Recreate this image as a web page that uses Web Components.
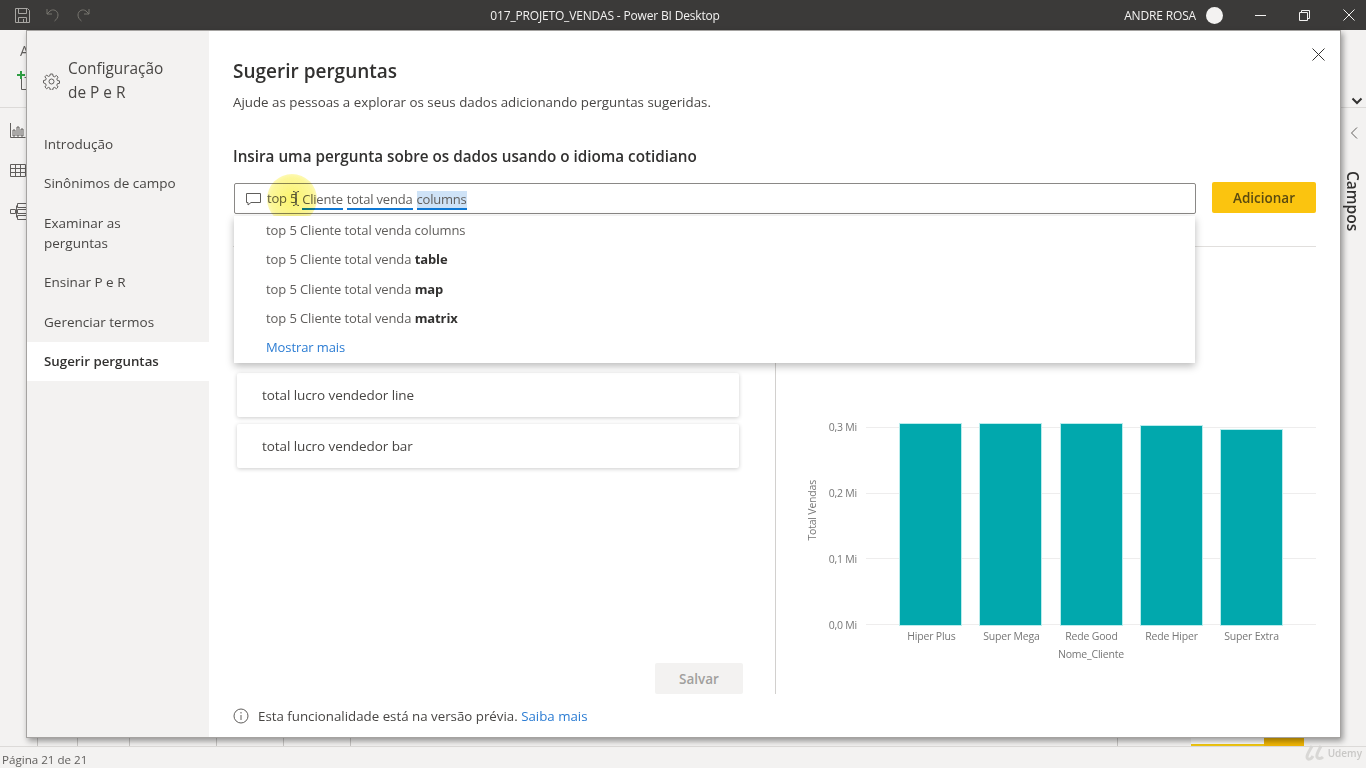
<!DOCTYPE html>
<html lang="pt">
<head>
<meta charset="utf-8">
<title>017_PROJETO_VENDAS - Power BI Desktop</title>
<style>
html, body { margin: 0; height: 100%; overflow: hidden; }
body { font-family: "Open Sans", "Liberation Sans", sans-serif; color: #323130; }
</style>
</head>
<body>
<pbi-app></pbi-app>
<script>
const define = (name, css, html, init) => {
	customElements.define(name, class extends HTMLElement {
		constructor() {
			super();
			this.attachShadow({ mode: 'open' });
			this.shadowRoot.innerHTML = `<style>${css}</style>${html}`;
			if (init) init(this.shadowRoot, this);
		}
	});
};

define('pbi-titlebar', `
	:host { display: flex; align-items: center; position: relative; height: 30px; background: #3b3a39; color: #f3f2f1; font-size: 12px; }
	svg { display: block; fill: none; stroke: currentColor; stroke-width: 1; }
	.left { display: flex; align-items: center; gap: 14px; padding-left: 14px; width: 120px; }
	.left .dim { color: #77756f; }
	.title { flex: 1; text-align: center; padding-right: 160px; margin-left: 112px; letter-spacing: -.17px; white-space: nowrap; }
	.user { display: flex; align-items: center; gap: 10px; letter-spacing: -.16px; }
	.dot { width: 17px; height: 17px; border-radius: 50%; background: #f3f2f1; }
	.win { display: flex; align-items: center; margin-left: 32px; gap: 33px; padding-right: 11px; }
`, `
	<div class="left">
		<svg width="17" height="17" viewBox="0 0 17 17" style="color:#a8a6a3"><path d="M1.5 1.5h12l2 2v12h-14z"/><path d="M4.5 1.5v5h8v-5M4.5 15.5v-5h8v5M9.5 12v3"/></svg>
		<svg class="dim" width="16" height="16" viewBox="0 0 16 16"><path d="M2 2v5h5M2 7l3-3c3-2.500 8-.5 8 4 0 2.500-1.500 4.500-3.500 6"/></svg>
		<svg class="dim" width="16" height="16" viewBox="0 0 16 16"><path d="M14 2v5H9M14 7l-3-3C8 1.500 3 3.500 3 8c0 2.500 1.500 4.500 3.500 6"/></svg>
	</div>
	<div class="title">017_PROJETO_VENDAS - Power BI Desktop</div>
	<div class="user">ANDRE ROSA <span class="dot"></span></div>
	<div class="win">
		<svg width="11" height="11" viewBox="0 0 11 11"><path d="M0 5.500h11"/></svg>
		<svg width="11" height="11" viewBox="0 0 11 11"><path d="M.5 2.500h8v8h-8zM2.500 2.500v-2h8v8h-2"/></svg>
		<svg width="12" height="12" viewBox="0 0 12 12"><path d="M.5.500l11 11M11.500.500l-11 11"/></svg>
	</div>
`);

define('pbi-backdrop', `
	:host { display: grid; grid-template-rows: 78px 1fr; grid-template-columns: 1fr 25px; min-height: 0; background: #f3f2f1; color: #605e5c; }
	svg { display: block; fill: none; stroke: #605e5c; stroke-width: 1; }
	.ribbon { grid-column: 1 / 3; border-bottom: 1px solid #dcdad8; display: flex; flex-direction: column; padding: 11px 0 0 20px; position: relative; font-size: 14px; }
	.ribbon .plus { margin: 11px 0 0 -5px; }
	.ribbon .fold { position: absolute; right: 3px; bottom: 2px; stroke: #323130; stroke-width: 2; }
	.rail { display: flex; flex-direction: column; gap: 24px; padding: 14px 0 0 10px; }
	.panel { display: flex; flex-direction: column; align-items: center; padding-top: 19px; color: #323130; }
	.panel span { writing-mode: vertical-rl; margin-top: 32px; margin-left: -1px; font-size: 15.500px; font-weight: 600; }
`, `
	<div class="ribbon">
		<span>A</span>
		<svg class="plus" width="20" height="19" viewBox="0 0 20 19"><path d="M6.500 6.500v12h11v-12h-8" stroke="#605e5c"/><path d="M6 0v8M2 4h8" stroke="#2f9e44" stroke-width="2"/></svg>
		<svg class="fold" width="12" height="8" viewBox="0 0 12 8"><path d="M1.500 1.500l4.500 4.500 4.500-4.500"/></svg>
	</div>
	<div class="rail">
		<svg width="16" height="16" viewBox="0 0 16 16"><path d="M.5 1v14.500h15M3 14V8h2v6zM7 14V5h2v9zM11 14V7h2v7z"/></svg>
		<svg width="16" height="16" viewBox="0 0 16 16"><path d="M.5 2.500h15v12H.5zM.5 6.500h15M.5 10.500h15M5.500 2.500v12M10.500 2.500v12"/></svg>
		<svg width="17" height="18" viewBox="0 0 17 18"><path d="M.5 7.500h5v4h-5zM7.500 1.500h9v4h-9zM7.500 7.500h9v4h-9zM7.500 13.500h9v4h-9zM5.500 9.500h2M6.500 3.500v12"/></svg>
	</div>
	<div class="panel">
		<svg width="8" height="12" viewBox="0 0 8 12"><path d="M7 .5L1.500 6 7 11.500"/></svg>
		<span>Campos</span>
	</div>
`);

define('pbi-page-tabs', `
	:host { display: flex; height: 10px; background: #f3f2f1; border-bottom: 1px solid #dcdad8; box-sizing: border-box; }
	i { display: block; border-right: 1px solid #c8c6c4; box-sizing: border-box; }
	.active { width: 73px; background: #fff; border: 0; border-bottom: 2px solid #f2c811; }
	.gold { width: 40px; background: #f2b705; border: 0; }
`, `
	<i style="width:38px"></i><i style="width:40px"></i><i style="width:52px"></i><i style="width:87px"></i><i style="width:67px"></i><i style="width:67px"></i><i style="width:767px"></i><i style="width:73px;border:0"></i><i class="active"></i><i class="gold"></i>
`);

define('pbi-statusbar', `
	:host { display: flex; justify-content: space-between; align-items: center; height: 21px; box-sizing: border-box; padding: 4px 4px 0 2px; background: #f3f2f1; font-size: 11.600px; color: #605e5c; }
	.udemy { display: flex; align-items: center; gap: 2px; color: #c9c8c6; font-weight: 600; font-size: 10px; margin-top: -13px; }
	svg { display: block; fill: none; stroke: #d8d7d5; stroke-width: 3; }
`, `
	<span>Página 21 de 21</span>
	<span class="udemy"><svg width="22" height="17" viewBox="0 0 22 17"><path d="M8 1C6 5 3 9 3 12c0 3 4 3 6-1M17 1c-2 4-5 8-4 11 1 2 4 2 6 0"/></svg>Udemy</span>
`);

define('pbi-nav-item', `
	:host { display: block; padding: 9.75px 17px; font-size: 13.5px; line-height: 20px; color: #484644; }
	:host([selected]) { background: #fff; font-weight: 600; font-size: 13.300px; color: #323130; }
`, `<slot></slot>`);

define('pbi-nav', `
	:host { display: flex; flex-direction: column; flex: 0 0 182px; background: #f3f2f1; }
	header { display: flex; align-items: center; gap: 8px; padding: 26px 16px 0 16px; margin-bottom: 19px; font-size: 15.400px; line-height: 24px; color: #484644; }
	svg { flex: none; display: block; fill: none; stroke: #605e5c; stroke-width: 1; }
`, `
	<header>
		<svg width="17" height="17" viewBox="0 0 17 17"><circle cx="8.500" cy="8.500" r="2.500"/><path d="M7.300 1h2.400l.4 2.200 1.500.6 1.800-1.300 1.700 1.700-1.300 1.800.6 1.500 2.100.4v2.400l-2.100.4-.6 1.500 1.300 1.800-1.700 1.700-1.800-1.300-1.500.6-.4 2.200H7.300l-.4-2.200-1.500-.6-1.800 1.300-1.700-1.700 1.300-1.800-.6-1.500L.5 9.900V7.500l2.100-.4.6-1.500-1.300-1.800 1.700-1.700 1.800 1.300 1.500-.6z"/></svg>
		<span>Configuração<br>de P e R</span>
	</header>
	<slot></slot>
`);

define('pbi-question-input', `
	:host { display: block; position: relative; flex: 1; font-size: 13px; color: #605e5c; }
	.box { display: flex; align-items: center; gap: 6px; height: 31px; box-sizing: border-box; border: 1px solid #8a8886; border-radius: 2px; padding: 1px 12px 0 11px; background: #fff; white-space: nowrap; }
	svg { display: block; fill: none; stroke: #605e5c; stroke-width: 1; flex: none; }
	.text { display: flex; gap: 4px; letter-spacing: -.2px; }
	.text > span { margin-right: 1px; }
	u { text-decoration: none; border-bottom: 2px solid #0f78d4; line-height: 17px; margin-top: 2px; }
	.sel { background: #cfe3f7; }
	.halo { position: absolute; left: 33px; top: -9px; width: 50px; height: 50px; border-radius: 50%; mix-blend-mode: multiply; background: radial-gradient(circle, rgba(250,240,60,.75) 0, rgba(250,240,70,.55) 60%, rgba(250,240,70,0) 100%); pointer-events: none; }
	.caret { position: absolute; left: 58px; top: 8px; stroke: #4b4a3a; }
	.menu { position: absolute; left: 0; right: 1px; top: 33px; padding-bottom: 1px; background: #fff; box-shadow: 0 3px 8px rgba(0,0,0,.28); z-index: 2; }
	.menu div { height: 29.250px; line-height: 29px; padding-left: 32px; letter-spacing: -.1px; }
	.menu b { color: #323130; font-weight: 700; }
	.menu .more { color: #2b7cd3; }
`, `
	<div class="box">
		<svg width="15" height="14" viewBox="0 0 15 14"><path d="M.5 1.500h14v9H5l-3 2.500v-2.500H.5z"/></svg>
		<span class="text"><span>top 5</span><u>Cliente</u><u>total venda</u><u class="sel">columns</u></span>
	</div>
	<span class="halo"></span>
	<svg class="caret" width="8" height="15" viewBox="0 0 8 15"><path d="M1 .5c2 0 3 1 3 2v10c0 1-1 2-3 2M7 .5c-2 0-3 1-3 2v10c0 1 1 2 3 2"/></svg>
	<div class="menu">
		<div>top 5 Cliente total venda columns</div>
		<div>top 5 Cliente total venda <b>table</b></div>
		<div>top 5 Cliente total venda <b>map</b></div>
		<div>top 5 Cliente total venda <b>matrix</b></div>
		<div class="more">Mostrar mais</div>
	</div>
`);

define('pbi-button', `
	:host { display: flex; align-items: center; justify-content: center; height: 31px; border-radius: 2px; font-size: 13.500px; font-weight: 600; background: #fbc40f; color: #5a4a10; }
	:host([disabled]) { background: #f3f2f1; color: #a19f9d; width: 88px; }
`, `<slot></slot>`);

define('pbi-question-card', `
	:host { display: flex; align-items: center; height: 44px; width: 502px; box-sizing: border-box; padding-left: 25px; border-radius: 2px; background: #fff; box-shadow: 0 1px 4px rgba(0,0,0,.2); font-size: 13.500px; color: #484644; letter-spacing: -.08px; }
`, `<slot></slot>`);

define('pbi-bar-chart', `
	:host { display: grid; grid-template-columns: 90px 450px; font-size: 10.500px; color: #777; letter-spacing: -.2px; margin-top: 173px; align-self: start; }
	.ytitle { position: absolute; left: 29px; top: 60px; writing-mode: vertical-rl; transform: rotate(180deg); line-height: 14px; }
	.y { position: relative; display: flex; flex-direction: column; justify-content: space-between; align-items: flex-end; height: 212px; margin-bottom: -9px; padding-right: 9px; box-sizing: border-box; line-height: 14px; }
	.plot { position: relative; height: 198px; margin-top: 7px; }
	.grid { position: absolute; inset: 0; display: flex; flex-direction: column; justify-content: space-between; }
	.grid i { display: block; border-top: 1px solid #eeeded; }
	.bars { position: absolute; left: 33px; right: 33px; bottom: -1px; display: flex; align-items: flex-end; gap: 17.250px; }
	.bars i { display: block; flex: 1; background: #01a8ad; outline: 1px solid #b9ecec; outline-offset: -1px; }
	.cats { grid-column: 2; display: flex; gap: 17.250px; padding: 0 33px 0 34px; margin-top: 4px; line-height: 14px; }
	.cats span { flex: 1 1 0; min-width: 0; text-align: center; white-space: nowrap; }
	.xtitle { grid-column: 2; text-align: center; margin-top: 4px; line-height: 14px; }
`, `
	<div class="y">
		<span class="ytitle">Total Vendas</span>
		<span>0,3 Mi</span><span>0,2 Mi</span><span>0,1 Mi</span><span>0,0 Mi</span>
	</div>
	<div class="plot">
		<div class="grid"><i></i><i></i><i></i><i></i></div>
		<div class="bars"></div>
	</div>
	<div class="cats"></div>
	<div class="xtitle">Nome_Cliente</div>
`, (root) => {
	const data = [['Hiper Plus', 203], ['Super Mega', 203], ['Rede Good', 203], ['Rede Hiper', 201], ['Super Extra', 197]];
	root.querySelector('.bars').innerHTML = data.map(d => `<i style="height:${d[1]}px"></i>`).join('');
	root.querySelector('.cats').innerHTML = data.map(d => `<span>${d[0]}</span>`).join('');
});

define('pbi-dialog', `
	:host { position: absolute; left: 26px; top: 30px; width: 1315px; height: 708px; box-sizing: border-box; display: flex; background: #fff; border: 1px solid #a5a3a1; box-shadow: 2px 3px 6px rgba(0,0,0,.4); }
	main { flex: 1; min-width: 0; display: flex; flex-direction: column; padding: 0 24px 0 24px; position: relative; }
	svg { display: block; fill: none; stroke: #323130; stroke-width: 1; }
	.close { position: absolute; right: 15px; top: 17px; }
	h1 { margin: 27px 0 0; font-size: 19px; line-height: 26px; font-weight: 600; color: #323130; }
	p { margin: 9px 0 0; font-size: 13.330px; line-height: 18px; color: #484644; }
	h2 { margin: 35px 0 0; font-size: 15.250px; line-height: 20px; font-weight: 600; color: #323130; }
	.ask { display: flex; gap: 16px; margin: 17px 0 0 1px; align-items: flex-start; }
	.ask pbi-button { width: 104px; margin-top: -1px; }
	.split { display: flex; height: 447px; margin-top: 32px; border-top: 1px solid #e1dfdd; }
	.list { width: 511px; margin-right: 32px; padding: 126px 0 0 4px; box-sizing: border-box; display: flex; flex-direction: column; gap: 7px; position: relative; }
	.list pbi-button { position: absolute; right: 0; bottom: 0; }
	.chart { flex: 1; border-left: 1px solid #d2d0ce; display: flex; position: relative; }
	.note { display: flex; align-items: center; gap: 9px; margin-top: 13px; font-size: 13.300px; line-height: 18px; color: #484644; }
	a { color: #2b7cd3; text-decoration: none; }
`, `
	<pbi-nav>
		<pbi-nav-item>Introdução</pbi-nav-item>
		<pbi-nav-item>Sinônimos de campo</pbi-nav-item>
		<pbi-nav-item>Examinar as<br>perguntas</pbi-nav-item>
		<pbi-nav-item>Ensinar P e R</pbi-nav-item>
		<pbi-nav-item>Gerenciar termos</pbi-nav-item>
		<pbi-nav-item selected>Sugerir perguntas</pbi-nav-item>
	</pbi-nav>
	<main>
		<svg class="close" width="13" height="13" viewBox="0 0 13 13"><path d="M.5.500l12 12M12.500.500l-12 12"/></svg>
		<h1>Sugerir perguntas</h1>
		<p>Ajude as pessoas a explorar os seus dados adicionando perguntas sugeridas.</p>
		<h2>Insira uma pergunta sobre os dados usando o idioma cotidiano</h2>
		<div class="ask">
			<pbi-question-input></pbi-question-input>
			<pbi-button>Adicionar</pbi-button>
		</div>
		<div class="split">
			<div class="list">
				<pbi-question-card>total lucro vendedor line</pbi-question-card>
				<pbi-question-card>total lucro vendedor bar</pbi-question-card>
				<pbi-button disabled>Salvar</pbi-button>
			</div>
			<div class="chart"><pbi-bar-chart></pbi-bar-chart></div>
		</div>
		<div class="note">
			<svg width="16" height="16" viewBox="0 0 16 16" style="stroke:#605e5c"><circle cx="8" cy="8" r="7"/><path d="M8 7v5M8 4v1.500"/></svg>
			<span>Esta funcionalidade está na versão prévia. <a>Saiba mais</a></span>
		</div>
	</main>
`);

define('pbi-app', `
	:host { display: grid; grid-template-rows: 30px 1fr 10px 21px; position: relative; width: 1366px; height: 768px; overflow: hidden; background: #f3f2f1; }
`, `
	<pbi-titlebar></pbi-titlebar>
	<pbi-backdrop></pbi-backdrop>
	<pbi-page-tabs></pbi-page-tabs>
	<pbi-statusbar></pbi-statusbar>
	<pbi-dialog></pbi-dialog>
`);
</script>
</body>
</html>
